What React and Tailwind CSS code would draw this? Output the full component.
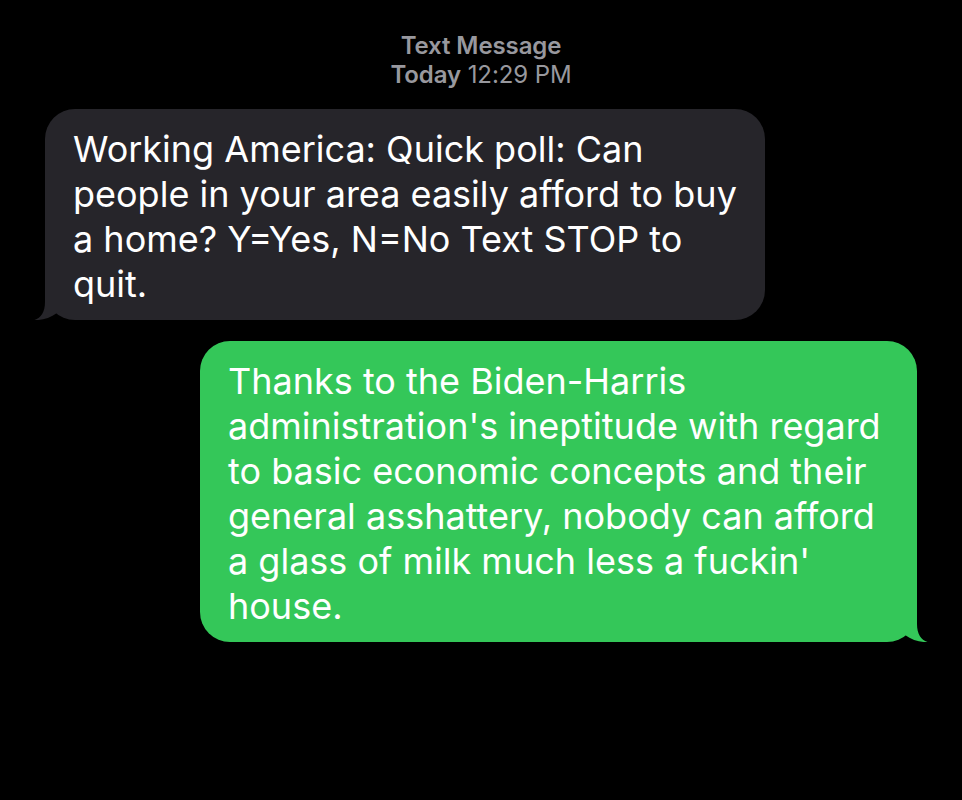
import React from "react";

const FONT = { fontFamily: "Inter, 'Noto Sans', sans-serif" };

const incoming = [
  "Working America: Quick poll: Can",
  "people in your area easily afford to buy",
  "a home? Y=Yes, N=No Text STOP to",
  "quit.",
];

const outgoing = [
  "Thanks to the Biden-Harris",
  "administration's ineptitude with regard",
  "to basic economic concepts and their",
  "general asshattery, nobody can afford",
  "a glass of milk much less a fuckin'",
  "house.",
];

/* ------------------ TAIL ------------------ */
const Tail = ({ side, color }) => (
  <svg
    width="30"
    height="30"
    viewBox="0 0 30 30"
    className={
      side === "left"
        ? "absolute bottom-0 left-[-12px]"
        : "absolute bottom-0 right-[-12px] -scale-x-100"
    }
  >
    <path
      d="M12 0 L12 12 C12 22 8 28 1.5 30 C9 30.5 17 28 24 23 L30 20 L30 0 Z"
      fill={color}
    />
  </svg>
);

const Bubble = ({ lines, side }) => {
  const isIn = side === "left";
  const color = isIn ? "#26252a" : "#34c759";
  return (
    <div
      className={`relative rounded-[30px] pl-[28px] pr-[20px] pt-[18px] pb-[13px] text-white text-[36px] leading-[45px] tracking-[0px] ${
        isIn ? "bg-[#26252a] w-[720px] ml-[45px]" : "bg-[#34c759] w-[717px] ml-[200px]"
      }`}
      style={FONT}
    >
      {lines.map((l, i) => (
        <div key={i} className="whitespace-nowrap">
          {l}
        </div>
      ))}
      <Tail side={side} color={color} />
    </div>
  );
};

export default function App() {
  return (
    <div className="w-[962px] h-[800px] bg-black overflow-hidden" style={FONT}>
      {/* ---------- HEADER ---------- */}
      <div className="pt-[31px] flex flex-col items-center text-[#98989e] text-[24px] leading-[29px] tracking-[-0.1px]">
        <div className="font-semibold">Text Message</div>
        <div>
          <span className="font-semibold">Today</span> 12:29 PM
        </div>
      </div>

      <div className="mt-[20px]">
        <Bubble lines={incoming} side="left" />
      </div>
      <div className="mt-[21px]">
        <Bubble lines={outgoing} side="right" />
      </div>
    </div>
  );
}
